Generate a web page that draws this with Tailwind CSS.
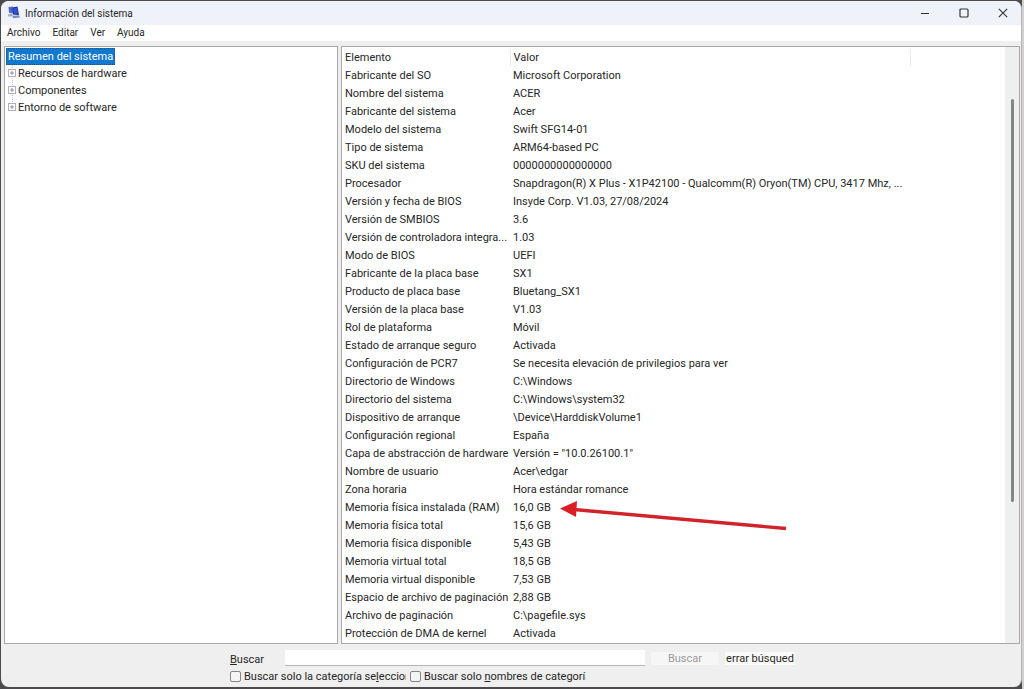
<!DOCTYPE html>
<html lang="es">
<head>
<meta charset="utf-8">
<meta name="viewport" content="width=device-width, initial-scale=1">
<title>Información del sistema</title>
<script src="https://cdn.jsdelivr.net/npm/@tailwindcss/browser@4"></script>
</head>
<body class="h-screen overflow-hidden bg-[#4c4a4c] font-['Roboto','Open_Sans',sans-serif] text-[11px] text-[#262626]">
<div class="flex h-full flex-col border-r-2 border-[#d2d0d1] pt-px pb-0.5 pl-px">
<main class="flex min-h-0 flex-1 flex-col overflow-hidden rounded-lg border-r border-[#b4b4b4] bg-[#efefef]">
  <header class="flex h-6 shrink-0 items-center bg-[#eff2f9] pl-1.5">
    <svg class="size-4" viewBox="0 0 16 16" aria-hidden="true">
      <path d="M1.500 2L6 1.500v7L2 8z" fill="#5d74c4"/><path d="M2.300 3l3.200-.5v4.500l-3-.4z" fill="#3f62d0"/>
      <path d="M5.500 2.500l5-1 1.500 8.500-6-.4z" fill="#1d2c98"/><path d="M6.400 3.300l3.500-.7 1.100 6-4.300-.2z" fill="#3353cf"/>
      <path d="M1 9.300l4.500-.5.700 2.500-4.800.2z" fill="#a3adc2"/><path d="M5.500 10.800l6.500-.5 1 2.200-7 .8z" fill="#7f8dba"/>
    </svg>
    <h1 class="ml-0.5 flex-1 text-[10px]">Información del sistema</h1>
    <button class="flex h-6 w-9 items-center justify-center" aria-label="Minimizar"><svg class="size-3" viewBox="0 0 12 12" fill="none" stroke="#333" stroke-width="1"><path d="M2 6.500h8"/></svg></button>
    <button class="flex h-6 w-[42px] items-center justify-center" aria-label="Maximizar"><svg class="size-3" viewBox="0 0 12 12" fill="none" stroke="#333" stroke-width="1.200"><rect x="2" y="2" width="8" height="8" rx="1"/></svg></button>
    <button class="flex h-6 w-9 items-center justify-center" aria-label="Cerrar"><svg class="size-3" viewBox="0 0 12 12" fill="none" stroke="#333" stroke-width="1.100"><path d="M1.800 1.800l8.400 8.400M10.200 1.800l-8.400 8.400"/></svg></button>
  </header>
  <nav class="flex h-4 shrink-0 items-center gap-3 bg-white pl-1.5 text-[10px] leading-4">
    <button>Archivo</button><button>Editar</button><button>Ver</button><button>Ayuda</button>
  </nav>
  <div class="flex min-h-0 flex-1 gap-[3px] pt-[5px] pr-px pl-[3px]">
    <aside class="w-[334px] shrink-0 border border-[#a8a8a8] bg-white pt-px pl-px">
      <ul class="leading-[17px]">
        <li><button class="block h-[17px] bg-[#0f78d0] px-0.5 text-white outline-1 -outline-offset-1 outline-dotted outline-[#31506e]">Resumen del sistema</button></li>
        <li class="flex h-[17px] items-center gap-0.5 pl-0.5"><svg class="h-[17px] w-2" viewBox="0 0 8 17" fill="none" aria-hidden="true"><path d="M4.500 0v4M4.500 13v4" stroke="#c4c4c4" stroke-dasharray="1 1"/><rect x=".5" y="4.500" width="7" height="7" stroke="#b0b0b0"/><path d="M2 8h4M4 6v4" stroke="#8790ad"/></svg><button>Recursos de hardware</button></li>
        <li class="flex h-[17px] items-center gap-0.5 pl-0.5"><svg class="h-[17px] w-2" viewBox="0 0 8 17" fill="none" aria-hidden="true"><path d="M4.500 0v4M4.500 13v4" stroke="#c4c4c4" stroke-dasharray="1 1"/><rect x=".5" y="4.500" width="7" height="7" stroke="#b0b0b0"/><path d="M2 8h4M4 6v4" stroke="#8790ad"/></svg><button>Componentes</button></li>
        <li class="flex h-[17px] items-center gap-0.5 pl-0.5"><svg class="h-[17px] w-2" viewBox="0 0 8 17" fill="none" aria-hidden="true"><path d="M4.500 0v4" stroke="#c4c4c4" stroke-dasharray="1 1"/><rect x=".5" y="4.500" width="7" height="7" stroke="#b0b0b0"/><path d="M2 8h4M4 6v4" stroke="#8790ad"/></svg><button>Entorno de software</button></li>
      </ul>
    </aside>
    <section class="flex min-w-0 flex-1 overflow-hidden border border-[#a8a8a8] bg-white">
      <div class="min-w-0 flex-1 overflow-hidden pt-0.5">
        <table class="w-[568px] table-fixed border-collapse text-left leading-[18px] whitespace-nowrap">
          <colgroup><col class="w-[168px]"><col class="w-[400px]"></colgroup>
          <thead><tr><th class="border-r border-[#ececec] p-0 pl-[3px] font-normal">Elemento</th><th class="border-r border-[#ececec] p-0 pl-[3px] font-normal">Valor</th></tr></thead>
          <tbody id="datos"></tbody>
        </table>
      </div>
      <div class="flex w-3.5 shrink-0 justify-center bg-[#eef0f0] pt-[52px] pb-[141px]"><div class="w-[3px] rounded-full bg-[#858585]"></div></div>
    </section>
  </div>
  <form class="flex h-[43px] shrink-0 flex-col pl-[229px]">
    <div class="flex h-6 items-center pt-1">
      <label for="q" class="w-[55px] pt-1"><u>B</u>uscar</label>
      <input id="q" type="text" class="h-4 w-[360px] border-b border-[#b5b5b5] bg-white px-1 outline-none">
      <button type="button" disabled class="ml-1.5 h-[13px] w-[68px] bg-[#f6f6f6] leading-[13px] text-[#9b9b9b]">Buscar</button>
      <button type="button" class="ml-1.5 flex h-[13px] w-[70px] items-center justify-center overflow-hidden bg-[#fafafa] leading-[13px] whitespace-nowrap">errar búsqued</button>
    </div>
    <div class="flex h-4 items-center gap-1 leading-[15px]">
      <label class="flex w-[176px] items-center gap-[3px]"><input type="checkbox" class="size-[11px] shrink-0 appearance-none rounded-xs border border-[#858585] bg-[#f5f5f5]"><span class="h-[13px] overflow-hidden leading-[13px] whitespace-nowrap">Buscar solo la categoría se<u>l</u>eccion</span></label>
      <label class="flex w-[176px] items-center gap-[3px]"><input type="checkbox" class="size-[11px] shrink-0 appearance-none rounded-xs border border-[#858585] bg-[#f5f5f5]"><span class="h-[13px] overflow-hidden leading-[13px] whitespace-nowrap">Buscar solo <u>n</u>ombres de categoría</span></label>
    </div>
  </form>
</main>
</div>
<template id="flecha"><svg class="pointer-events-none absolute top-0.5 left-[50px] h-[30px] w-[228px]" viewBox="0 0 228 30" aria-hidden="true"><path d="M14 8.500L226 27.500" stroke="#d1242a" stroke-width="3.400"/><path d="M0 7.500L17 0L16 16z" fill="#dc1f25"/></svg></template>
<script>
const datos = [
["Fabricante del SO","Microsoft Corporation"],
["Nombre del sistema","ACER"],
["Fabricante del sistema","Acer"],
["Modelo del sistema","Swift SFG14-01"],
["Tipo de sistema","ARM64-based PC"],
["SKU del sistema","0000000000000000"],
["Procesador","Snapdragon(R) X Plus - X1P42100 - Qualcomm(R) Oryon(TM) CPU, 3417 Mhz, ..."],
["Versión y fecha de BIOS","Insyde Corp. V1.03, 27/08/2024"],
["Versión de SMBIOS","3.6"],
["Versión de controladora integra...","1.03"],
["Modo de BIOS","UEFI"],
["Fabricante de la placa base","SX1"],
["Producto de placa base","Bluetang_SX1"],
["Versión de la placa base","V1.03"],
["Rol de plataforma","Móvil"],
["Estado de arranque seguro","Activada"],
["Configuración de PCR7","Se necesita elevación de privilegios para ver"],
["Directorio de Windows","C:\\Windows"],
["Directorio del sistema","C:\\Windows\\system32"],
["Dispositivo de arranque","\\Device\\HarddiskVolume1"],
["Configuración regional","España"],
["Capa de abstracción de hardware","Versión = \"10.0.26100.1\""],
["Nombre de usuario","Acer\\edgar"],
["Zona horaria","Hora estándar romance"],
["Memoria física instalada (RAM)","16,0 GB"],
["Memoria física total","15,6 GB"],
["Memoria física disponible","5,43 GB"],
["Memoria virtual total","18,5 GB"],
["Memoria virtual disponible","7,53 GB"],
["Espacio de archivo de paginación","2,88 GB"],
["Archivo de paginación","C:\\pagefile.sys"],
["Protección de DMA de kernel","Activada"]
];
const cuerpo = document.getElementById("datos");
for (const [elemento, valor] of datos) {
  const fila = cuerpo.insertRow();
  for (const texto of [elemento, valor]) {
    const celda = fila.insertCell();
    celda.className = "relative p-0 pl-[3px]";
    celda.textContent = texto;
  }
  if (elemento.includes("(RAM)")) fila.cells[1].append(document.getElementById("flecha").content.cloneNode(true));
}
</script>
</body>
</html>
